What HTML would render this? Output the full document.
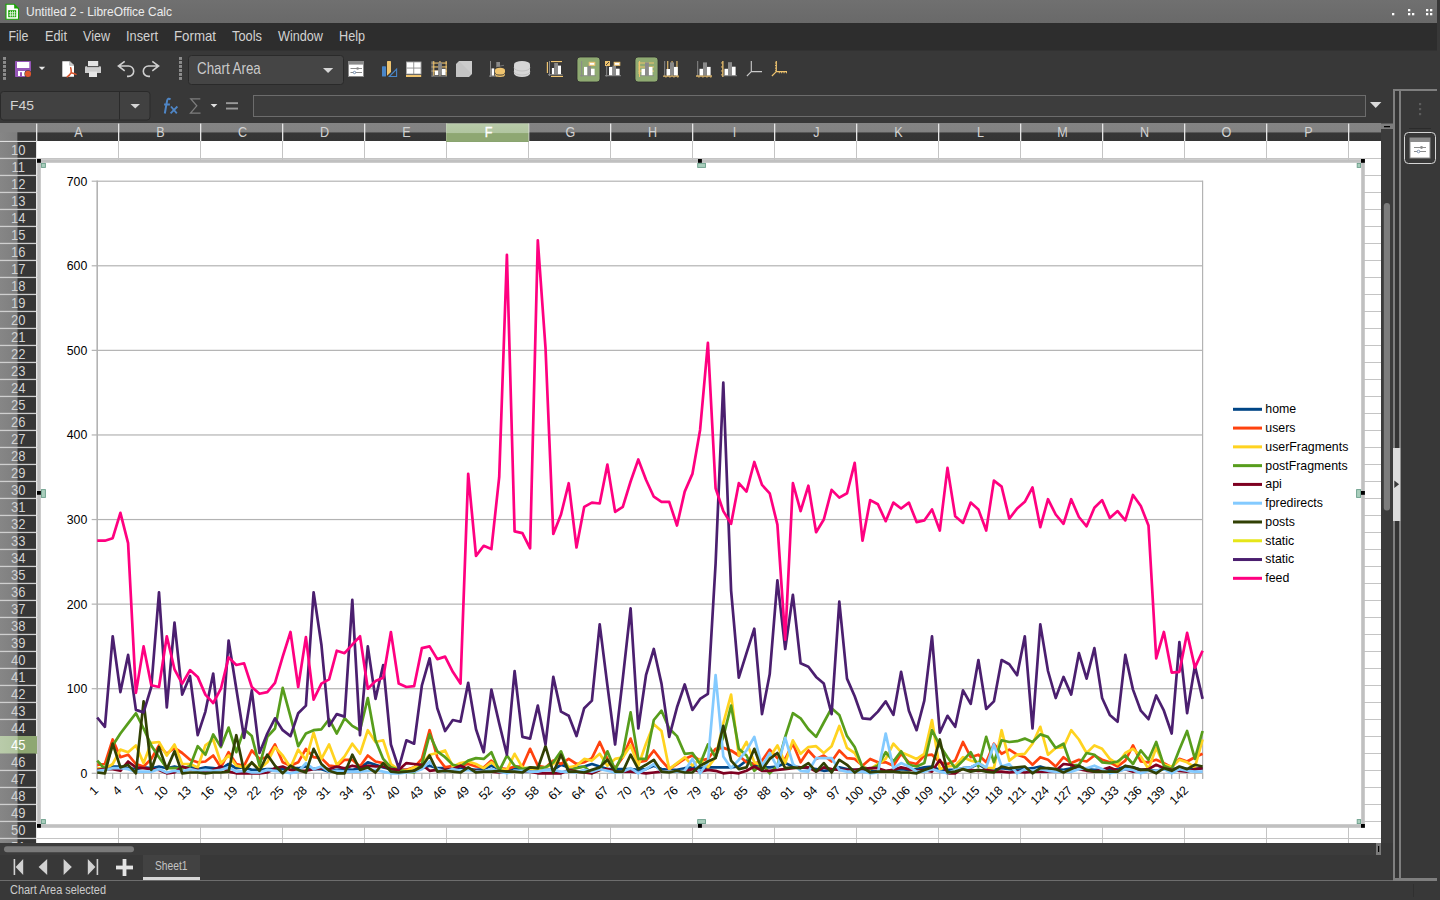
<!DOCTYPE html>
<html><head><meta charset="utf-8"><title>Untitled 2 - LibreOffice Calc</title>
<style>
html,body{margin:0;padding:0;background:#383838;width:1440px;height:900px;overflow:hidden;font-family:"Liberation Sans",sans-serif;}
svg text{font-family:"Liberation Sans",sans-serif;}
</style></head><body>
<svg width="1440" height="900" viewBox="0 0 1440 900" font-family="Liberation Sans, sans-serif" style="display:block"><rect x="0" y="0" width="1440" height="900" fill="#383838"/>
<defs><linearGradient id="tg" x1="0" y1="0" x2="0" y2="1"><stop offset="0" stop-color="#707070"/><stop offset="1" stop-color="#696969"/></linearGradient><linearGradient id="chg" x1="0" y1="0" x2="0" y2="1"><stop offset="0" stop-color="#848484"/><stop offset="0.50" stop-color="#828282"/><stop offset="0.55" stop-color="#363636"/><stop offset="1" stop-color="#343434"/></linearGradient><linearGradient id="rhg" x1="0" y1="0" x2="1" y2="0"><stop offset="0" stop-color="#868686"/><stop offset="0.46" stop-color="#7e7e7e"/><stop offset="0.50" stop-color="#363636"/><stop offset="1" stop-color="#363636"/></linearGradient><linearGradient id="rsel" x1="0" y1="0" x2="1" y2="0"><stop offset="0" stop-color="#b9cbaa"/><stop offset="0.46" stop-color="#b1c5a0"/><stop offset="0.50" stop-color="#8ea772"/><stop offset="1" stop-color="#8ea772"/></linearGradient><linearGradient id="csel" x1="0" y1="0" x2="0" y2="1"><stop offset="0" stop-color="#b9cbaa"/><stop offset="0.50" stop-color="#b1c5a0"/><stop offset="0.55" stop-color="#8ea772"/><stop offset="1" stop-color="#8ea772"/></linearGradient><clipPath id="plot"><rect x="96" y="170" width="1108" height="606"/></clipPath></defs>
<rect x="0" y="0" width="1437" height="23" fill="url(#tg)"/>
<rect x="0" y="23" width="1437" height="28" fill="#2d2d2d"/>
<rect x="0" y="50" width="1437" height="1" fill="#323232"/>
<rect x="1392" y="13" width="2.3" height="2.3" fill="#ffffff"/>
<rect x="1408" y="9" width="2.3" height="2.3" fill="#ffffff"/>
<rect x="1408" y="13" width="2.3" height="2.3" fill="#ffffff"/>
<rect x="1412" y="13" width="2.3" height="2.3" fill="#ffffff"/>
<rect x="1426" y="9" width="2.3" height="2.3" fill="#ffffff"/>
<rect x="1430" y="9" width="2.3" height="2.3" fill="#ffffff"/>
<rect x="1426" y="13" width="2.3" height="2.3" fill="#ffffff"/>
<rect x="1430" y="13" width="2.3" height="2.3" fill="#ffffff"/>
<path d="M6 4.2h8.2l4.3 4.3v10.8h-12.5z" fill="#ffffff" stroke="#18a303" stroke-width="1.1"/>
<path d="M14.2 4.2l4.3 4.3h-4.3z" fill="#18a303"/>
<rect x="8.2" y="10.2" width="8" height="7" fill="#18a303"/>
<rect x="10.0" y="10.8" width="0.8" height="5.8" fill="#dff3dc"/>
<rect x="12.0" y="10.8" width="0.8" height="5.8" fill="#dff3dc"/>
<rect x="14.0" y="10.8" width="0.8" height="5.8" fill="#dff3dc"/>
<rect x="8.8" y="12.0" width="6.8" height="0.7" fill="#dff3dc"/>
<rect x="8.8" y="13.8" width="6.8" height="0.7" fill="#dff3dc"/>
<rect x="8.8" y="15.4" width="6.8" height="0.7" fill="#dff3dc"/>
<text x="26" y="16" font-size="13.5" fill="#ececec" textLength="146.0" lengthAdjust="spacingAndGlyphs" >Untitled 2 - LibreOffice Calc</text>
<text x="8.5" y="40.9" font-size="14.2" fill="#d2d2d2" textLength="20.0" lengthAdjust="spacingAndGlyphs" >File</text>
<text x="45" y="40.9" font-size="14.2" fill="#d2d2d2" textLength="22.0" lengthAdjust="spacingAndGlyphs" >Edit</text>
<text x="83" y="40.9" font-size="14.2" fill="#d2d2d2" textLength="27.0" lengthAdjust="spacingAndGlyphs" >View</text>
<text x="126" y="40.9" font-size="14.2" fill="#d2d2d2" textLength="32.0" lengthAdjust="spacingAndGlyphs" >Insert</text>
<text x="174" y="40.9" font-size="14.2" fill="#d2d2d2" textLength="42.0" lengthAdjust="spacingAndGlyphs" >Format</text>
<text x="232" y="40.9" font-size="14.2" fill="#d2d2d2" textLength="30.0" lengthAdjust="spacingAndGlyphs" >Tools</text>
<text x="278" y="40.9" font-size="14.2" fill="#d2d2d2" textLength="45.0" lengthAdjust="spacingAndGlyphs" >Window</text>
<text x="339" y="40.9" font-size="14.2" fill="#d2d2d2" textLength="26.0" lengthAdjust="spacingAndGlyphs" >Help</text>
<rect x="188.5" y="55.5" width="155" height="29" rx="3" fill="#454545" stroke="#2a2a2a" stroke-width="1"/>
<text x="197" y="74.3" font-size="16.2" fill="#cbcbcb" textLength="63.8" lengthAdjust="spacingAndGlyphs" >Chart Area</text>
<path d="M323 67.9h10.2l-5.1 5.2z" fill="#d6d6d6"/>
<rect x="0.5" y="91.5" width="149.5" height="28.5" rx="3" fill="#414141" stroke="#2a2a2a" stroke-width="1"/>
<rect x="119" y="92" width="1" height="27.5" fill="#2a2a2a"/>
<text x="10" y="109.5" font-size="13.5" fill="#d4d4d4" textLength="24.0" lengthAdjust="spacingAndGlyphs" >F45</text>
<path d="M130.5 104h9.5l-4.75 4.6z" fill="#d6d6d6"/>
<path d="M170.5 99.4C169.1 98.2 167.5 98.6 167.1 100.6L164.8 113.5M164.1 104.4H169.9" fill="none" stroke="#4f86c6" stroke-width="2"/>
<path d="M171 106.5L176.8 113.3M177.4 106.5L170.6 113.3" fill="none" stroke="#4f86c6" stroke-width="1.8"/>
<path d="M200.3 98.8h-9.5l6 7-6.3 7.4h10" fill="none" stroke="#7d7d7d" stroke-width="1.3"/>
<path d="M210.6 104h6.8l-3.4 3.4z" fill="#e0e0e0"/>
<rect x="226" y="102.2" width="12" height="1.9" fill="#9a9a9a"/><rect x="226" y="107.6" width="12" height="1.9" fill="#9a9a9a"/>
<rect x="253.5" y="95.5" width="1112" height="21" fill="#3d3d3d" stroke="#6c6c6c" stroke-width="1"/>
<path d="M1370 102h11.4l-5.7 6z" fill="#dadada"/>
<rect x="37" y="141" width="1344" height="702" fill="#ffffff"/>
<rect x="0" y="123" width="1381" height="18" fill="url(#chg)"/>
<rect x="0" y="123" width="36" height="18.5" fill="url(#rhg)"/>
<rect x="0" y="123" width="36" height="9.3" fill="#848484"/>
<text transform="translate(78.5,136.8) scale(0.9,1)" text-anchor="middle" font-size="14" fill="#d2d2d2" >A</text>
<text transform="translate(160.5,136.8) scale(0.9,1)" text-anchor="middle" font-size="14" fill="#d2d2d2" >B</text>
<text transform="translate(242.5,136.8) scale(0.9,1)" text-anchor="middle" font-size="14" fill="#d2d2d2" >C</text>
<text transform="translate(324.5,136.8) scale(0.9,1)" text-anchor="middle" font-size="14" fill="#d2d2d2" >D</text>
<text transform="translate(406.5,136.8) scale(0.9,1)" text-anchor="middle" font-size="14" fill="#d2d2d2" >E</text>
<text transform="translate(570.5,136.8) scale(0.9,1)" text-anchor="middle" font-size="14" fill="#d2d2d2" >G</text>
<text transform="translate(652.5,136.8) scale(0.9,1)" text-anchor="middle" font-size="14" fill="#d2d2d2" >H</text>
<text transform="translate(734.5,136.8) scale(0.9,1)" text-anchor="middle" font-size="14" fill="#d2d2d2" >I</text>
<text transform="translate(816.5,136.8) scale(0.9,1)" text-anchor="middle" font-size="14" fill="#d2d2d2" >J</text>
<text transform="translate(898.5,136.8) scale(0.9,1)" text-anchor="middle" font-size="14" fill="#d2d2d2" >K</text>
<text transform="translate(980.5,136.8) scale(0.9,1)" text-anchor="middle" font-size="14" fill="#d2d2d2" >L</text>
<text transform="translate(1062.5,136.8) scale(0.9,1)" text-anchor="middle" font-size="14" fill="#d2d2d2" >M</text>
<text transform="translate(1144.5,136.8) scale(0.9,1)" text-anchor="middle" font-size="14" fill="#d2d2d2" >N</text>
<text transform="translate(1226.5,136.8) scale(0.9,1)" text-anchor="middle" font-size="14" fill="#d2d2d2" >O</text>
<text transform="translate(1308.5,136.8) scale(0.9,1)" text-anchor="middle" font-size="14" fill="#d2d2d2" >P</text>
<rect x="36.0" y="123.6" width="1.3" height="18" fill="#e6e6e6"/>
<rect x="118.0" y="123.6" width="1.3" height="18" fill="#e6e6e6"/>
<rect x="118.0" y="141" width="1" height="702" fill="#c4c4c4"/>
<rect x="200.0" y="123.6" width="1.3" height="18" fill="#e6e6e6"/>
<rect x="200.0" y="141" width="1" height="702" fill="#c4c4c4"/>
<rect x="282.0" y="123.6" width="1.3" height="18" fill="#e6e6e6"/>
<rect x="282.0" y="141" width="1" height="702" fill="#c4c4c4"/>
<rect x="364.0" y="123.6" width="1.3" height="18" fill="#e6e6e6"/>
<rect x="364.0" y="141" width="1" height="702" fill="#c4c4c4"/>
<rect x="446.0" y="123.6" width="1.3" height="18" fill="#e6e6e6"/>
<rect x="446.0" y="141" width="1" height="702" fill="#c4c4c4"/>
<rect x="528.0" y="123.6" width="1.3" height="18" fill="#e6e6e6"/>
<rect x="528.0" y="141" width="1" height="702" fill="#c4c4c4"/>
<rect x="610.0" y="123.6" width="1.3" height="18" fill="#e6e6e6"/>
<rect x="610.0" y="141" width="1" height="702" fill="#c4c4c4"/>
<rect x="692.0" y="123.6" width="1.3" height="18" fill="#e6e6e6"/>
<rect x="692.0" y="141" width="1" height="702" fill="#c4c4c4"/>
<rect x="774.0" y="123.6" width="1.3" height="18" fill="#e6e6e6"/>
<rect x="774.0" y="141" width="1" height="702" fill="#c4c4c4"/>
<rect x="856.0" y="123.6" width="1.3" height="18" fill="#e6e6e6"/>
<rect x="856.0" y="141" width="1" height="702" fill="#c4c4c4"/>
<rect x="938.0" y="123.6" width="1.3" height="18" fill="#e6e6e6"/>
<rect x="938.0" y="141" width="1" height="702" fill="#c4c4c4"/>
<rect x="1020.0" y="123.6" width="1.3" height="18" fill="#e6e6e6"/>
<rect x="1020.0" y="141" width="1" height="702" fill="#c4c4c4"/>
<rect x="1102.0" y="123.6" width="1.3" height="18" fill="#e6e6e6"/>
<rect x="1102.0" y="141" width="1" height="702" fill="#c4c4c4"/>
<rect x="1184.0" y="123.6" width="1.3" height="18" fill="#e6e6e6"/>
<rect x="1184.0" y="141" width="1" height="702" fill="#c4c4c4"/>
<rect x="1266.0" y="123.6" width="1.3" height="18" fill="#e6e6e6"/>
<rect x="1266.0" y="141" width="1" height="702" fill="#c4c4c4"/>
<rect x="1348.0" y="123.6" width="1.3" height="18" fill="#e6e6e6"/>
<rect x="1348.0" y="141" width="1" height="702" fill="#c4c4c4"/>
<rect x="446.2" y="123.5" width="82.4" height="18.3" fill="url(#csel)"/>
<rect x="446.2" y="141.2" width="82.4" height="0.7" fill="#7f9b64"/>
<text transform="translate(488.5,136.8) scale(0.9,1)" text-anchor="middle" font-size="14" fill="#ffffff" stroke="#ffffff" stroke-width="0.35">F</text>
<rect x="0" y="141" width="36.5" height="702" fill="url(#rhg)"/>
<rect x="0" y="736.0" width="37" height="17.5" fill="url(#rsel)"/>
<text transform="translate(18.3,155.1) scale(0.93,1)" text-anchor="middle" font-size="14" fill="#d2d2d2" >10</text>
<rect x="0" y="157.8" width="36.5" height="1.3" fill="#cfcfcf"/>
<rect x="37" y="158.0" width="1344" height="1" fill="#c4c4c4"/>
<text transform="translate(18.3,172.1) scale(0.93,1)" text-anchor="middle" font-size="14" fill="#d2d2d2" >11</text>
<rect x="0" y="174.8" width="36.5" height="1.3" fill="#cfcfcf"/>
<rect x="37" y="175.0" width="1344" height="1" fill="#c4c4c4"/>
<text transform="translate(18.3,189.1) scale(0.93,1)" text-anchor="middle" font-size="14" fill="#d2d2d2" >12</text>
<rect x="0" y="191.8" width="36.5" height="1.3" fill="#cfcfcf"/>
<rect x="37" y="192.0" width="1344" height="1" fill="#c4c4c4"/>
<text transform="translate(18.3,206.1) scale(0.93,1)" text-anchor="middle" font-size="14" fill="#d2d2d2" >13</text>
<rect x="0" y="208.8" width="36.5" height="1.3" fill="#cfcfcf"/>
<rect x="37" y="209.0" width="1344" height="1" fill="#c4c4c4"/>
<text transform="translate(18.3,223.1) scale(0.93,1)" text-anchor="middle" font-size="14" fill="#d2d2d2" >14</text>
<rect x="0" y="225.8" width="36.5" height="1.3" fill="#cfcfcf"/>
<rect x="37" y="226.0" width="1344" height="1" fill="#c4c4c4"/>
<text transform="translate(18.3,240.1) scale(0.93,1)" text-anchor="middle" font-size="14" fill="#d2d2d2" >15</text>
<rect x="0" y="242.8" width="36.5" height="1.3" fill="#cfcfcf"/>
<rect x="37" y="243.0" width="1344" height="1" fill="#c4c4c4"/>
<text transform="translate(18.3,257.1) scale(0.93,1)" text-anchor="middle" font-size="14" fill="#d2d2d2" >16</text>
<rect x="0" y="259.8" width="36.5" height="1.3" fill="#cfcfcf"/>
<rect x="37" y="260.0" width="1344" height="1" fill="#c4c4c4"/>
<text transform="translate(18.3,274.1) scale(0.93,1)" text-anchor="middle" font-size="14" fill="#d2d2d2" >17</text>
<rect x="0" y="276.8" width="36.5" height="1.3" fill="#cfcfcf"/>
<rect x="37" y="277.0" width="1344" height="1" fill="#c4c4c4"/>
<text transform="translate(18.3,291.1) scale(0.93,1)" text-anchor="middle" font-size="14" fill="#d2d2d2" >18</text>
<rect x="0" y="293.8" width="36.5" height="1.3" fill="#cfcfcf"/>
<rect x="37" y="294.0" width="1344" height="1" fill="#c4c4c4"/>
<text transform="translate(18.3,308.1) scale(0.93,1)" text-anchor="middle" font-size="14" fill="#d2d2d2" >19</text>
<rect x="0" y="310.8" width="36.5" height="1.3" fill="#cfcfcf"/>
<rect x="37" y="311.0" width="1344" height="1" fill="#c4c4c4"/>
<text transform="translate(18.3,325.1) scale(0.93,1)" text-anchor="middle" font-size="14" fill="#d2d2d2" >20</text>
<rect x="0" y="327.8" width="36.5" height="1.3" fill="#cfcfcf"/>
<rect x="37" y="328.0" width="1344" height="1" fill="#c4c4c4"/>
<text transform="translate(18.3,342.1) scale(0.93,1)" text-anchor="middle" font-size="14" fill="#d2d2d2" >21</text>
<rect x="0" y="344.8" width="36.5" height="1.3" fill="#cfcfcf"/>
<rect x="37" y="345.0" width="1344" height="1" fill="#c4c4c4"/>
<text transform="translate(18.3,359.1) scale(0.93,1)" text-anchor="middle" font-size="14" fill="#d2d2d2" >22</text>
<rect x="0" y="361.8" width="36.5" height="1.3" fill="#cfcfcf"/>
<rect x="37" y="362.0" width="1344" height="1" fill="#c4c4c4"/>
<text transform="translate(18.3,376.1) scale(0.93,1)" text-anchor="middle" font-size="14" fill="#d2d2d2" >23</text>
<rect x="0" y="378.8" width="36.5" height="1.3" fill="#cfcfcf"/>
<rect x="37" y="379.0" width="1344" height="1" fill="#c4c4c4"/>
<text transform="translate(18.3,393.1) scale(0.93,1)" text-anchor="middle" font-size="14" fill="#d2d2d2" >24</text>
<rect x="0" y="395.8" width="36.5" height="1.3" fill="#cfcfcf"/>
<rect x="37" y="396.0" width="1344" height="1" fill="#c4c4c4"/>
<text transform="translate(18.3,410.1) scale(0.93,1)" text-anchor="middle" font-size="14" fill="#d2d2d2" >25</text>
<rect x="0" y="412.8" width="36.5" height="1.3" fill="#cfcfcf"/>
<rect x="37" y="413.0" width="1344" height="1" fill="#c4c4c4"/>
<text transform="translate(18.3,427.1) scale(0.93,1)" text-anchor="middle" font-size="14" fill="#d2d2d2" >26</text>
<rect x="0" y="429.8" width="36.5" height="1.3" fill="#cfcfcf"/>
<rect x="37" y="430.0" width="1344" height="1" fill="#c4c4c4"/>
<text transform="translate(18.3,444.1) scale(0.93,1)" text-anchor="middle" font-size="14" fill="#d2d2d2" >27</text>
<rect x="0" y="446.8" width="36.5" height="1.3" fill="#cfcfcf"/>
<rect x="37" y="447.0" width="1344" height="1" fill="#c4c4c4"/>
<text transform="translate(18.3,461.1) scale(0.93,1)" text-anchor="middle" font-size="14" fill="#d2d2d2" >28</text>
<rect x="0" y="463.8" width="36.5" height="1.3" fill="#cfcfcf"/>
<rect x="37" y="464.0" width="1344" height="1" fill="#c4c4c4"/>
<text transform="translate(18.3,478.1) scale(0.93,1)" text-anchor="middle" font-size="14" fill="#d2d2d2" >29</text>
<rect x="0" y="480.8" width="36.5" height="1.3" fill="#cfcfcf"/>
<rect x="37" y="481.0" width="1344" height="1" fill="#c4c4c4"/>
<text transform="translate(18.3,495.1) scale(0.93,1)" text-anchor="middle" font-size="14" fill="#d2d2d2" >30</text>
<rect x="0" y="497.8" width="36.5" height="1.3" fill="#cfcfcf"/>
<rect x="37" y="498.0" width="1344" height="1" fill="#c4c4c4"/>
<text transform="translate(18.3,512.1) scale(0.93,1)" text-anchor="middle" font-size="14" fill="#d2d2d2" >31</text>
<rect x="0" y="514.8" width="36.5" height="1.3" fill="#cfcfcf"/>
<rect x="37" y="515.0" width="1344" height="1" fill="#c4c4c4"/>
<text transform="translate(18.3,529.1) scale(0.93,1)" text-anchor="middle" font-size="14" fill="#d2d2d2" >32</text>
<rect x="0" y="531.8" width="36.5" height="1.3" fill="#cfcfcf"/>
<rect x="37" y="532.0" width="1344" height="1" fill="#c4c4c4"/>
<text transform="translate(18.3,546.1) scale(0.93,1)" text-anchor="middle" font-size="14" fill="#d2d2d2" >33</text>
<rect x="0" y="548.8" width="36.5" height="1.3" fill="#cfcfcf"/>
<rect x="37" y="549.0" width="1344" height="1" fill="#c4c4c4"/>
<text transform="translate(18.3,563.1) scale(0.93,1)" text-anchor="middle" font-size="14" fill="#d2d2d2" >34</text>
<rect x="0" y="565.8" width="36.5" height="1.3" fill="#cfcfcf"/>
<rect x="37" y="566.0" width="1344" height="1" fill="#c4c4c4"/>
<text transform="translate(18.3,580.1) scale(0.93,1)" text-anchor="middle" font-size="14" fill="#d2d2d2" >35</text>
<rect x="0" y="582.8" width="36.5" height="1.3" fill="#cfcfcf"/>
<rect x="37" y="583.0" width="1344" height="1" fill="#c4c4c4"/>
<text transform="translate(18.3,597.1) scale(0.93,1)" text-anchor="middle" font-size="14" fill="#d2d2d2" >36</text>
<rect x="0" y="599.8" width="36.5" height="1.3" fill="#cfcfcf"/>
<rect x="37" y="600.0" width="1344" height="1" fill="#c4c4c4"/>
<text transform="translate(18.3,614.1) scale(0.93,1)" text-anchor="middle" font-size="14" fill="#d2d2d2" >37</text>
<rect x="0" y="616.8" width="36.5" height="1.3" fill="#cfcfcf"/>
<rect x="37" y="617.0" width="1344" height="1" fill="#c4c4c4"/>
<text transform="translate(18.3,631.1) scale(0.93,1)" text-anchor="middle" font-size="14" fill="#d2d2d2" >38</text>
<rect x="0" y="633.8" width="36.5" height="1.3" fill="#cfcfcf"/>
<rect x="37" y="634.0" width="1344" height="1" fill="#c4c4c4"/>
<text transform="translate(18.3,648.1) scale(0.93,1)" text-anchor="middle" font-size="14" fill="#d2d2d2" >39</text>
<rect x="0" y="650.8" width="36.5" height="1.3" fill="#cfcfcf"/>
<rect x="37" y="651.0" width="1344" height="1" fill="#c4c4c4"/>
<text transform="translate(18.3,665.1) scale(0.93,1)" text-anchor="middle" font-size="14" fill="#d2d2d2" >40</text>
<rect x="0" y="667.8" width="36.5" height="1.3" fill="#cfcfcf"/>
<rect x="37" y="668.0" width="1344" height="1" fill="#c4c4c4"/>
<text transform="translate(18.3,682.1) scale(0.93,1)" text-anchor="middle" font-size="14" fill="#d2d2d2" >41</text>
<rect x="0" y="684.8" width="36.5" height="1.3" fill="#cfcfcf"/>
<rect x="37" y="685.0" width="1344" height="1" fill="#c4c4c4"/>
<text transform="translate(18.3,699.1) scale(0.93,1)" text-anchor="middle" font-size="14" fill="#d2d2d2" >42</text>
<rect x="0" y="701.8" width="36.5" height="1.3" fill="#cfcfcf"/>
<rect x="37" y="702.0" width="1344" height="1" fill="#c4c4c4"/>
<text transform="translate(18.3,716.1) scale(0.93,1)" text-anchor="middle" font-size="14" fill="#d2d2d2" >43</text>
<rect x="0" y="718.8" width="36.5" height="1.3" fill="#cfcfcf"/>
<rect x="37" y="719.0" width="1344" height="1" fill="#c4c4c4"/>
<text transform="translate(18.3,733.1) scale(0.93,1)" text-anchor="middle" font-size="14" fill="#d2d2d2" >44</text>
<rect x="37" y="736.0" width="1344" height="1" fill="#c4c4c4"/>
<text transform="translate(18.3,750.1) scale(0.93,1)" text-anchor="middle" font-size="14" fill="#ffffff" >45</text>
<rect x="37" y="753.0" width="1344" height="1" fill="#c4c4c4"/>
<text transform="translate(18.3,767.1) scale(0.93,1)" text-anchor="middle" font-size="14" fill="#d2d2d2" >46</text>
<rect x="0" y="769.8" width="36.5" height="1.3" fill="#cfcfcf"/>
<rect x="37" y="770.0" width="1344" height="1" fill="#c4c4c4"/>
<text transform="translate(18.3,784.1) scale(0.93,1)" text-anchor="middle" font-size="14" fill="#d2d2d2" >47</text>
<rect x="0" y="786.8" width="36.5" height="1.3" fill="#cfcfcf"/>
<rect x="37" y="787.0" width="1344" height="1" fill="#c4c4c4"/>
<text transform="translate(18.3,801.1) scale(0.93,1)" text-anchor="middle" font-size="14" fill="#d2d2d2" >48</text>
<rect x="0" y="803.8" width="36.5" height="1.3" fill="#cfcfcf"/>
<rect x="37" y="804.0" width="1344" height="1" fill="#c4c4c4"/>
<text transform="translate(18.3,818.1) scale(0.93,1)" text-anchor="middle" font-size="14" fill="#d2d2d2" >49</text>
<rect x="0" y="820.8" width="36.5" height="1.3" fill="#cfcfcf"/>
<rect x="37" y="821.0" width="1344" height="1" fill="#c4c4c4"/>
<text transform="translate(18.3,835.1) scale(0.93,1)" text-anchor="middle" font-size="14" fill="#d2d2d2" >50</text>
<rect x="0" y="837.8" width="36.5" height="1.3" fill="#cfcfcf"/>
<rect x="37" y="838.0" width="1344" height="1" fill="#c4c4c4"/>
<text transform="translate(18.3,852.1) scale(0.93,1)" text-anchor="middle" font-size="14" fill="#d2d2d2" >51</text>
<rect x="36" y="141" width="1" height="702" fill="#e6e6e6"/>
<rect x="0" y="140.9" width="36.5" height="1.1" fill="#e0e0e0"/>
<rect x="35.5" y="736.2" width="1.7" height="17.6" fill="#8ea772"/>
<rect x="0" y="843" width="1393" height="57" fill="#383838"/>
<rect x="39" y="161" width="1324" height="665" fill="#ffffff" stroke="#c0c0c0" stroke-width="3.6"/>
<rect x="41.4" y="163.4" width="4.0" height="4.0" fill="#a9cebc" stroke="#6a9e8a" stroke-width="0.9"/>
<rect x="1357.2" y="163.4" width="3.4000000000000004" height="4.0" fill="#a9cebc" stroke="#6a9e8a" stroke-width="0.9"/>
<rect x="41.4" y="819.6" width="4.0" height="4.0" fill="#a9cebc" stroke="#6a9e8a" stroke-width="0.9"/>
<rect x="1357.2" y="819.6" width="3.4000000000000004" height="4.0" fill="#a9cebc" stroke="#6a9e8a" stroke-width="0.9"/>
<rect x="697.6999999999999" y="163.4" width="7.8" height="4.0" fill="#a9cebc" stroke="#6a9e8a" stroke-width="0.9"/>
<rect x="697.6999999999999" y="819.6" width="7.8" height="4.0" fill="#a9cebc" stroke="#6a9e8a" stroke-width="0.9"/>
<rect x="41.4" y="489.59999999999997" width="4.0" height="7.8" fill="#a9cebc" stroke="#6a9e8a" stroke-width="0.9"/>
<rect x="1356.6000000000001" y="489.59999999999997" width="4.0" height="7.8" fill="#a9cebc" stroke="#6a9e8a" stroke-width="0.9"/>
<rect x="37" y="159" width="3.9" height="3.8" fill="#000000"/>
<rect x="1361" y="159" width="3.9" height="3.8" fill="#000000"/>
<rect x="37" y="824" width="3.9" height="3.8" fill="#000000"/>
<rect x="1361" y="824" width="3.9" height="3.8" fill="#000000"/>
<rect x="698" y="159" width="3.9" height="3.8" fill="#000000"/>
<rect x="698" y="824" width="3.9" height="3.8" fill="#000000"/>
<rect x="37" y="491" width="3.9" height="3.8" fill="#000000"/>
<rect x="1361" y="491" width="3.9" height="3.8" fill="#000000"/>
<rect x="91.7" y="772.70" width="1110.9" height="1.2" fill="#b3b3b3"/>
<text x="87.3" y="777.70" font-size="12.3" text-anchor="end" fill="#000">0</text>
<rect x="91.7" y="688.11" width="1110.9" height="1.2" fill="#b3b3b3"/>
<text x="87.3" y="693.11" font-size="12.3" text-anchor="end" fill="#000">100</text>
<rect x="91.7" y="603.53" width="1110.9" height="1.2" fill="#b3b3b3"/>
<text x="87.3" y="608.53" font-size="12.3" text-anchor="end" fill="#000">200</text>
<rect x="91.7" y="518.94" width="1110.9" height="1.2" fill="#b3b3b3"/>
<text x="87.3" y="523.94" font-size="12.3" text-anchor="end" fill="#000">300</text>
<rect x="91.7" y="434.36" width="1110.9" height="1.2" fill="#b3b3b3"/>
<text x="87.3" y="439.36" font-size="12.3" text-anchor="end" fill="#000">400</text>
<rect x="91.7" y="349.77" width="1110.9" height="1.2" fill="#b3b3b3"/>
<text x="87.3" y="354.77" font-size="12.3" text-anchor="end" fill="#000">500</text>
<rect x="91.7" y="265.19" width="1110.9" height="1.2" fill="#b3b3b3"/>
<text x="87.3" y="270.19" font-size="12.3" text-anchor="end" fill="#000">600</text>
<rect x="91.7" y="180.60" width="1110.9" height="1.2" fill="#b3b3b3"/>
<text x="87.3" y="185.60" font-size="12.3" text-anchor="end" fill="#000">700</text>
<rect x="96.4" y="180.6" width="1.6" height="598.1" fill="#b3b3b3"/>
<rect x="1202.0" y="180.6" width="1.2" height="598.1" fill="#b3b3b3"/>
<rect x="96.60" y="773.3" width="1.2" height="5.6" fill="#b3b3b3"/>
<rect x="104.33" y="773.3" width="1.2" height="5.6" fill="#b3b3b3"/>
<rect x="112.06" y="773.3" width="1.2" height="5.6" fill="#b3b3b3"/>
<rect x="119.79" y="773.3" width="1.2" height="5.6" fill="#b3b3b3"/>
<rect x="127.52" y="773.3" width="1.2" height="5.6" fill="#b3b3b3"/>
<rect x="135.25" y="773.3" width="1.2" height="5.6" fill="#b3b3b3"/>
<rect x="142.98" y="773.3" width="1.2" height="5.6" fill="#b3b3b3"/>
<rect x="150.71" y="773.3" width="1.2" height="5.6" fill="#b3b3b3"/>
<rect x="158.44" y="773.3" width="1.2" height="5.6" fill="#b3b3b3"/>
<rect x="166.17" y="773.3" width="1.2" height="5.6" fill="#b3b3b3"/>
<rect x="173.90" y="773.3" width="1.2" height="5.6" fill="#b3b3b3"/>
<rect x="181.63" y="773.3" width="1.2" height="5.6" fill="#b3b3b3"/>
<rect x="189.36" y="773.3" width="1.2" height="5.6" fill="#b3b3b3"/>
<rect x="197.09" y="773.3" width="1.2" height="5.6" fill="#b3b3b3"/>
<rect x="204.82" y="773.3" width="1.2" height="5.6" fill="#b3b3b3"/>
<rect x="212.55" y="773.3" width="1.2" height="5.6" fill="#b3b3b3"/>
<rect x="220.28" y="773.3" width="1.2" height="5.6" fill="#b3b3b3"/>
<rect x="228.01" y="773.3" width="1.2" height="5.6" fill="#b3b3b3"/>
<rect x="235.74" y="773.3" width="1.2" height="5.6" fill="#b3b3b3"/>
<rect x="243.47" y="773.3" width="1.2" height="5.6" fill="#b3b3b3"/>
<rect x="251.20" y="773.3" width="1.2" height="5.6" fill="#b3b3b3"/>
<rect x="258.93" y="773.3" width="1.2" height="5.6" fill="#b3b3b3"/>
<rect x="266.66" y="773.3" width="1.2" height="5.6" fill="#b3b3b3"/>
<rect x="274.39" y="773.3" width="1.2" height="5.6" fill="#b3b3b3"/>
<rect x="282.12" y="773.3" width="1.2" height="5.6" fill="#b3b3b3"/>
<rect x="289.85" y="773.3" width="1.2" height="5.6" fill="#b3b3b3"/>
<rect x="297.58" y="773.3" width="1.2" height="5.6" fill="#b3b3b3"/>
<rect x="305.31" y="773.3" width="1.2" height="5.6" fill="#b3b3b3"/>
<rect x="313.04" y="773.3" width="1.2" height="5.6" fill="#b3b3b3"/>
<rect x="320.77" y="773.3" width="1.2" height="5.6" fill="#b3b3b3"/>
<rect x="328.50" y="773.3" width="1.2" height="5.6" fill="#b3b3b3"/>
<rect x="336.23" y="773.3" width="1.2" height="5.6" fill="#b3b3b3"/>
<rect x="343.96" y="773.3" width="1.2" height="5.6" fill="#b3b3b3"/>
<rect x="351.69" y="773.3" width="1.2" height="5.6" fill="#b3b3b3"/>
<rect x="359.42" y="773.3" width="1.2" height="5.6" fill="#b3b3b3"/>
<rect x="367.15" y="773.3" width="1.2" height="5.6" fill="#b3b3b3"/>
<rect x="374.88" y="773.3" width="1.2" height="5.6" fill="#b3b3b3"/>
<rect x="382.61" y="773.3" width="1.2" height="5.6" fill="#b3b3b3"/>
<rect x="390.34" y="773.3" width="1.2" height="5.6" fill="#b3b3b3"/>
<rect x="398.07" y="773.3" width="1.2" height="5.6" fill="#b3b3b3"/>
<rect x="405.80" y="773.3" width="1.2" height="5.6" fill="#b3b3b3"/>
<rect x="413.53" y="773.3" width="1.2" height="5.6" fill="#b3b3b3"/>
<rect x="421.26" y="773.3" width="1.2" height="5.6" fill="#b3b3b3"/>
<rect x="428.99" y="773.3" width="1.2" height="5.6" fill="#b3b3b3"/>
<rect x="436.72" y="773.3" width="1.2" height="5.6" fill="#b3b3b3"/>
<rect x="444.45" y="773.3" width="1.2" height="5.6" fill="#b3b3b3"/>
<rect x="452.18" y="773.3" width="1.2" height="5.6" fill="#b3b3b3"/>
<rect x="459.91" y="773.3" width="1.2" height="5.6" fill="#b3b3b3"/>
<rect x="467.64" y="773.3" width="1.2" height="5.6" fill="#b3b3b3"/>
<rect x="475.37" y="773.3" width="1.2" height="5.6" fill="#b3b3b3"/>
<rect x="483.10" y="773.3" width="1.2" height="5.6" fill="#b3b3b3"/>
<rect x="490.83" y="773.3" width="1.2" height="5.6" fill="#b3b3b3"/>
<rect x="498.56" y="773.3" width="1.2" height="5.6" fill="#b3b3b3"/>
<rect x="506.29" y="773.3" width="1.2" height="5.6" fill="#b3b3b3"/>
<rect x="514.02" y="773.3" width="1.2" height="5.6" fill="#b3b3b3"/>
<rect x="521.75" y="773.3" width="1.2" height="5.6" fill="#b3b3b3"/>
<rect x="529.48" y="773.3" width="1.2" height="5.6" fill="#b3b3b3"/>
<rect x="537.21" y="773.3" width="1.2" height="5.6" fill="#b3b3b3"/>
<rect x="544.94" y="773.3" width="1.2" height="5.6" fill="#b3b3b3"/>
<rect x="552.67" y="773.3" width="1.2" height="5.6" fill="#b3b3b3"/>
<rect x="560.40" y="773.3" width="1.2" height="5.6" fill="#b3b3b3"/>
<rect x="568.13" y="773.3" width="1.2" height="5.6" fill="#b3b3b3"/>
<rect x="575.86" y="773.3" width="1.2" height="5.6" fill="#b3b3b3"/>
<rect x="583.59" y="773.3" width="1.2" height="5.6" fill="#b3b3b3"/>
<rect x="591.32" y="773.3" width="1.2" height="5.6" fill="#b3b3b3"/>
<rect x="599.05" y="773.3" width="1.2" height="5.6" fill="#b3b3b3"/>
<rect x="606.78" y="773.3" width="1.2" height="5.6" fill="#b3b3b3"/>
<rect x="614.51" y="773.3" width="1.2" height="5.6" fill="#b3b3b3"/>
<rect x="622.24" y="773.3" width="1.2" height="5.6" fill="#b3b3b3"/>
<rect x="629.97" y="773.3" width="1.2" height="5.6" fill="#b3b3b3"/>
<rect x="637.70" y="773.3" width="1.2" height="5.6" fill="#b3b3b3"/>
<rect x="645.43" y="773.3" width="1.2" height="5.6" fill="#b3b3b3"/>
<rect x="653.17" y="773.3" width="1.2" height="5.6" fill="#b3b3b3"/>
<rect x="660.90" y="773.3" width="1.2" height="5.6" fill="#b3b3b3"/>
<rect x="668.63" y="773.3" width="1.2" height="5.6" fill="#b3b3b3"/>
<rect x="676.36" y="773.3" width="1.2" height="5.6" fill="#b3b3b3"/>
<rect x="684.09" y="773.3" width="1.2" height="5.6" fill="#b3b3b3"/>
<rect x="691.82" y="773.3" width="1.2" height="5.6" fill="#b3b3b3"/>
<rect x="699.55" y="773.3" width="1.2" height="5.6" fill="#b3b3b3"/>
<rect x="707.28" y="773.3" width="1.2" height="5.6" fill="#b3b3b3"/>
<rect x="715.01" y="773.3" width="1.2" height="5.6" fill="#b3b3b3"/>
<rect x="722.74" y="773.3" width="1.2" height="5.6" fill="#b3b3b3"/>
<rect x="730.47" y="773.3" width="1.2" height="5.6" fill="#b3b3b3"/>
<rect x="738.20" y="773.3" width="1.2" height="5.6" fill="#b3b3b3"/>
<rect x="745.93" y="773.3" width="1.2" height="5.6" fill="#b3b3b3"/>
<rect x="753.66" y="773.3" width="1.2" height="5.6" fill="#b3b3b3"/>
<rect x="761.39" y="773.3" width="1.2" height="5.6" fill="#b3b3b3"/>
<rect x="769.12" y="773.3" width="1.2" height="5.6" fill="#b3b3b3"/>
<rect x="776.85" y="773.3" width="1.2" height="5.6" fill="#b3b3b3"/>
<rect x="784.58" y="773.3" width="1.2" height="5.6" fill="#b3b3b3"/>
<rect x="792.31" y="773.3" width="1.2" height="5.6" fill="#b3b3b3"/>
<rect x="800.04" y="773.3" width="1.2" height="5.6" fill="#b3b3b3"/>
<rect x="807.77" y="773.3" width="1.2" height="5.6" fill="#b3b3b3"/>
<rect x="815.50" y="773.3" width="1.2" height="5.6" fill="#b3b3b3"/>
<rect x="823.23" y="773.3" width="1.2" height="5.6" fill="#b3b3b3"/>
<rect x="830.96" y="773.3" width="1.2" height="5.6" fill="#b3b3b3"/>
<rect x="838.69" y="773.3" width="1.2" height="5.6" fill="#b3b3b3"/>
<rect x="846.42" y="773.3" width="1.2" height="5.6" fill="#b3b3b3"/>
<rect x="854.15" y="773.3" width="1.2" height="5.6" fill="#b3b3b3"/>
<rect x="861.88" y="773.3" width="1.2" height="5.6" fill="#b3b3b3"/>
<rect x="869.61" y="773.3" width="1.2" height="5.6" fill="#b3b3b3"/>
<rect x="877.34" y="773.3" width="1.2" height="5.6" fill="#b3b3b3"/>
<rect x="885.07" y="773.3" width="1.2" height="5.6" fill="#b3b3b3"/>
<rect x="892.80" y="773.3" width="1.2" height="5.6" fill="#b3b3b3"/>
<rect x="900.53" y="773.3" width="1.2" height="5.6" fill="#b3b3b3"/>
<rect x="908.26" y="773.3" width="1.2" height="5.6" fill="#b3b3b3"/>
<rect x="915.99" y="773.3" width="1.2" height="5.6" fill="#b3b3b3"/>
<rect x="923.72" y="773.3" width="1.2" height="5.6" fill="#b3b3b3"/>
<rect x="931.45" y="773.3" width="1.2" height="5.6" fill="#b3b3b3"/>
<rect x="939.18" y="773.3" width="1.2" height="5.6" fill="#b3b3b3"/>
<rect x="946.91" y="773.3" width="1.2" height="5.6" fill="#b3b3b3"/>
<rect x="954.64" y="773.3" width="1.2" height="5.6" fill="#b3b3b3"/>
<rect x="962.37" y="773.3" width="1.2" height="5.6" fill="#b3b3b3"/>
<rect x="970.10" y="773.3" width="1.2" height="5.6" fill="#b3b3b3"/>
<rect x="977.83" y="773.3" width="1.2" height="5.6" fill="#b3b3b3"/>
<rect x="985.56" y="773.3" width="1.2" height="5.6" fill="#b3b3b3"/>
<rect x="993.29" y="773.3" width="1.2" height="5.6" fill="#b3b3b3"/>
<rect x="1001.02" y="773.3" width="1.2" height="5.6" fill="#b3b3b3"/>
<rect x="1008.75" y="773.3" width="1.2" height="5.6" fill="#b3b3b3"/>
<rect x="1016.48" y="773.3" width="1.2" height="5.6" fill="#b3b3b3"/>
<rect x="1024.21" y="773.3" width="1.2" height="5.6" fill="#b3b3b3"/>
<rect x="1031.94" y="773.3" width="1.2" height="5.6" fill="#b3b3b3"/>
<rect x="1039.67" y="773.3" width="1.2" height="5.6" fill="#b3b3b3"/>
<rect x="1047.40" y="773.3" width="1.2" height="5.6" fill="#b3b3b3"/>
<rect x="1055.13" y="773.3" width="1.2" height="5.6" fill="#b3b3b3"/>
<rect x="1062.86" y="773.3" width="1.2" height="5.6" fill="#b3b3b3"/>
<rect x="1070.59" y="773.3" width="1.2" height="5.6" fill="#b3b3b3"/>
<rect x="1078.32" y="773.3" width="1.2" height="5.6" fill="#b3b3b3"/>
<rect x="1086.05" y="773.3" width="1.2" height="5.6" fill="#b3b3b3"/>
<rect x="1093.78" y="773.3" width="1.2" height="5.6" fill="#b3b3b3"/>
<rect x="1101.51" y="773.3" width="1.2" height="5.6" fill="#b3b3b3"/>
<rect x="1109.24" y="773.3" width="1.2" height="5.6" fill="#b3b3b3"/>
<rect x="1116.97" y="773.3" width="1.2" height="5.6" fill="#b3b3b3"/>
<rect x="1124.70" y="773.3" width="1.2" height="5.6" fill="#b3b3b3"/>
<rect x="1132.43" y="773.3" width="1.2" height="5.6" fill="#b3b3b3"/>
<rect x="1140.16" y="773.3" width="1.2" height="5.6" fill="#b3b3b3"/>
<rect x="1147.89" y="773.3" width="1.2" height="5.6" fill="#b3b3b3"/>
<rect x="1155.62" y="773.3" width="1.2" height="5.6" fill="#b3b3b3"/>
<rect x="1163.35" y="773.3" width="1.2" height="5.6" fill="#b3b3b3"/>
<rect x="1171.08" y="773.3" width="1.2" height="5.6" fill="#b3b3b3"/>
<rect x="1178.81" y="773.3" width="1.2" height="5.6" fill="#b3b3b3"/>
<rect x="1186.54" y="773.3" width="1.2" height="5.6" fill="#b3b3b3"/>
<rect x="1194.27" y="773.3" width="1.2" height="5.6" fill="#b3b3b3"/>
<rect x="1202.00" y="773.3" width="1.2" height="5.6" fill="#b3b3b3"/>
<text transform="translate(96.10,788.0) rotate(-45)" text-anchor="end" y="4.3" font-size="12.3" fill="#000">1</text>
<text transform="translate(119.29,788.0) rotate(-45)" text-anchor="end" y="4.3" font-size="12.3" fill="#000">4</text>
<text transform="translate(142.48,788.0) rotate(-45)" text-anchor="end" y="4.3" font-size="12.3" fill="#000">7</text>
<text transform="translate(165.67,788.0) rotate(-45)" text-anchor="end" y="4.3" font-size="12.3" fill="#000">10</text>
<text transform="translate(188.86,788.0) rotate(-45)" text-anchor="end" y="4.3" font-size="12.3" fill="#000">13</text>
<text transform="translate(212.05,788.0) rotate(-45)" text-anchor="end" y="4.3" font-size="12.3" fill="#000">16</text>
<text transform="translate(235.24,788.0) rotate(-45)" text-anchor="end" y="4.3" font-size="12.3" fill="#000">19</text>
<text transform="translate(258.43,788.0) rotate(-45)" text-anchor="end" y="4.3" font-size="12.3" fill="#000">22</text>
<text transform="translate(281.62,788.0) rotate(-45)" text-anchor="end" y="4.3" font-size="12.3" fill="#000">25</text>
<text transform="translate(304.81,788.0) rotate(-45)" text-anchor="end" y="4.3" font-size="12.3" fill="#000">28</text>
<text transform="translate(328.00,788.0) rotate(-45)" text-anchor="end" y="4.3" font-size="12.3" fill="#000">31</text>
<text transform="translate(351.19,788.0) rotate(-45)" text-anchor="end" y="4.3" font-size="12.3" fill="#000">34</text>
<text transform="translate(374.38,788.0) rotate(-45)" text-anchor="end" y="4.3" font-size="12.3" fill="#000">37</text>
<text transform="translate(397.57,788.0) rotate(-45)" text-anchor="end" y="4.3" font-size="12.3" fill="#000">40</text>
<text transform="translate(420.76,788.0) rotate(-45)" text-anchor="end" y="4.3" font-size="12.3" fill="#000">43</text>
<text transform="translate(443.95,788.0) rotate(-45)" text-anchor="end" y="4.3" font-size="12.3" fill="#000">46</text>
<text transform="translate(467.14,788.0) rotate(-45)" text-anchor="end" y="4.3" font-size="12.3" fill="#000">49</text>
<text transform="translate(490.33,788.0) rotate(-45)" text-anchor="end" y="4.3" font-size="12.3" fill="#000">52</text>
<text transform="translate(513.52,788.0) rotate(-45)" text-anchor="end" y="4.3" font-size="12.3" fill="#000">55</text>
<text transform="translate(536.71,788.0) rotate(-45)" text-anchor="end" y="4.3" font-size="12.3" fill="#000">58</text>
<text transform="translate(559.90,788.0) rotate(-45)" text-anchor="end" y="4.3" font-size="12.3" fill="#000">61</text>
<text transform="translate(583.09,788.0) rotate(-45)" text-anchor="end" y="4.3" font-size="12.3" fill="#000">64</text>
<text transform="translate(606.28,788.0) rotate(-45)" text-anchor="end" y="4.3" font-size="12.3" fill="#000">67</text>
<text transform="translate(629.47,788.0) rotate(-45)" text-anchor="end" y="4.3" font-size="12.3" fill="#000">70</text>
<text transform="translate(652.67,788.0) rotate(-45)" text-anchor="end" y="4.3" font-size="12.3" fill="#000">73</text>
<text transform="translate(675.86,788.0) rotate(-45)" text-anchor="end" y="4.3" font-size="12.3" fill="#000">76</text>
<text transform="translate(699.05,788.0) rotate(-45)" text-anchor="end" y="4.3" font-size="12.3" fill="#000">79</text>
<text transform="translate(722.24,788.0) rotate(-45)" text-anchor="end" y="4.3" font-size="12.3" fill="#000">82</text>
<text transform="translate(745.43,788.0) rotate(-45)" text-anchor="end" y="4.3" font-size="12.3" fill="#000">85</text>
<text transform="translate(768.62,788.0) rotate(-45)" text-anchor="end" y="4.3" font-size="12.3" fill="#000">88</text>
<text transform="translate(791.81,788.0) rotate(-45)" text-anchor="end" y="4.3" font-size="12.3" fill="#000">91</text>
<text transform="translate(815.00,788.0) rotate(-45)" text-anchor="end" y="4.3" font-size="12.3" fill="#000">94</text>
<text transform="translate(838.19,788.0) rotate(-45)" text-anchor="end" y="4.3" font-size="12.3" fill="#000">97</text>
<text transform="translate(861.38,788.0) rotate(-45)" text-anchor="end" y="4.3" font-size="12.3" fill="#000">100</text>
<text transform="translate(884.57,788.0) rotate(-45)" text-anchor="end" y="4.3" font-size="12.3" fill="#000">103</text>
<text transform="translate(907.76,788.0) rotate(-45)" text-anchor="end" y="4.3" font-size="12.3" fill="#000">106</text>
<text transform="translate(930.95,788.0) rotate(-45)" text-anchor="end" y="4.3" font-size="12.3" fill="#000">109</text>
<text transform="translate(954.14,788.0) rotate(-45)" text-anchor="end" y="4.3" font-size="12.3" fill="#000">112</text>
<text transform="translate(977.33,788.0) rotate(-45)" text-anchor="end" y="4.3" font-size="12.3" fill="#000">115</text>
<text transform="translate(1000.52,788.0) rotate(-45)" text-anchor="end" y="4.3" font-size="12.3" fill="#000">118</text>
<text transform="translate(1023.71,788.0) rotate(-45)" text-anchor="end" y="4.3" font-size="12.3" fill="#000">121</text>
<text transform="translate(1046.90,788.0) rotate(-45)" text-anchor="end" y="4.3" font-size="12.3" fill="#000">124</text>
<text transform="translate(1070.09,788.0) rotate(-45)" text-anchor="end" y="4.3" font-size="12.3" fill="#000">127</text>
<text transform="translate(1093.28,788.0) rotate(-45)" text-anchor="end" y="4.3" font-size="12.3" fill="#000">130</text>
<text transform="translate(1116.47,788.0) rotate(-45)" text-anchor="end" y="4.3" font-size="12.3" fill="#000">133</text>
<text transform="translate(1139.66,788.0) rotate(-45)" text-anchor="end" y="4.3" font-size="12.3" fill="#000">136</text>
<text transform="translate(1162.85,788.0) rotate(-45)" text-anchor="end" y="4.3" font-size="12.3" fill="#000">139</text>
<text transform="translate(1186.04,788.0) rotate(-45)" text-anchor="end" y="4.3" font-size="12.3" fill="#000">142</text>
<g clip-path="url(#plot)" fill="none" stroke-width="2.7" stroke-linejoin="round" stroke-linecap="butt">
<polyline points="97.2,769.1 104.9,768.2 112.7,766.5 120.4,766.5 128.1,768.2 135.9,769.1 143.6,767.4 151.3,768.2 159.0,766.5 166.8,768.2 174.5,766.5 182.2,768.2 190.0,766.5 197.7,769.1 205.4,767.4 213.2,768.2 220.9,769.1 228.6,764.0 236.3,768.2 244.1,767.4 251.8,769.9 259.5,769.9 267.3,769.1 275.0,769.1 282.7,769.1 290.5,768.2 298.2,768.2 305.9,766.5 313.6,769.1 321.4,769.1 329.1,771.6 336.8,769.9 344.6,769.1 352.3,769.9 360.0,768.2 367.8,762.3 375.5,764.8 383.2,767.4 390.9,769.1 398.7,769.9 406.4,769.9 414.1,769.1 421.9,768.2 429.6,765.7 437.3,768.2 445.1,768.2 452.8,769.1 460.5,767.4 468.2,769.1 476.0,769.9 483.7,769.1 491.4,765.7 499.2,769.1 506.9,769.9 514.6,768.2 522.4,769.1 530.1,769.1 537.8,769.9 545.5,769.9 553.3,769.9 561.0,764.8 568.7,767.4 576.5,767.4 584.2,766.5 591.9,764.0 599.7,766.5 607.4,769.1 615.1,769.1 622.8,769.1 630.6,769.1 638.3,769.9 646.0,769.1 653.8,765.7 661.5,769.1 669.2,769.9 677.0,769.9 684.7,768.2 692.4,767.4 700.1,768.2 707.9,767.4 715.6,767.4 723.3,767.4 731.1,767.4 738.8,766.5 746.5,760.6 754.3,764.8 762.0,767.4 769.7,767.4 777.4,766.5 785.2,763.1 792.9,766.5 800.6,767.4 808.4,768.2 816.1,769.1 823.8,770.8 831.6,769.9 839.3,767.4 847.0,769.1 854.7,769.9 862.5,769.9 870.2,770.8 877.9,771.6 885.7,771.6 893.4,769.9 901.1,769.1 908.9,769.9 916.6,769.1 924.3,767.4 932.0,766.5 939.8,769.9 947.5,769.9 955.2,769.9 963.0,768.2 970.7,767.4 978.4,764.0 986.2,769.1 993.9,769.9 1001.6,768.2 1009.3,769.1 1017.1,769.9 1024.8,769.1 1032.5,768.2 1040.3,766.5 1048.0,769.1 1055.7,769.1 1063.5,769.9 1071.2,768.2 1078.9,766.5 1086.6,769.1 1094.4,769.9 1102.1,769.9 1109.8,769.9 1117.6,769.1 1125.3,766.5 1133.0,767.4 1140.8,769.9 1148.5,769.9 1156.2,770.8 1163.9,769.1 1171.7,769.9 1179.4,767.4 1187.1,769.1 1194.9,769.1 1202.6,768.2" stroke="#004586"/>
<polyline points="97.2,764.8 104.9,764.0 112.7,739.5 120.4,757.2 128.1,754.7 135.9,764.0 143.6,766.5 151.3,758.9 159.0,745.4 166.8,753.8 174.5,747.9 182.2,753.0 190.0,759.8 197.7,762.3 205.4,761.5 213.2,755.5 220.9,767.4 228.6,752.2 236.3,764.0 244.1,765.7 251.8,750.5 259.5,758.9 267.3,757.2 275.0,744.5 282.7,762.3 290.5,765.7 298.2,762.3 305.9,748.8 313.6,757.2 321.4,758.1 329.1,765.7 336.8,766.5 344.6,759.8 352.3,759.8 360.0,766.5 367.8,755.5 375.5,761.5 383.2,763.1 390.9,767.4 398.7,769.9 406.4,769.9 414.1,767.4 421.9,758.9 429.6,730.2 437.3,757.2 445.1,767.4 452.8,765.7 460.5,765.7 468.2,764.0 476.0,766.5 483.7,767.4 491.4,760.6 499.2,768.2 506.9,769.1 514.6,766.5 522.4,766.5 530.1,748.8 537.8,765.7 545.5,767.4 553.3,760.6 561.0,764.0 568.7,758.9 576.5,764.0 584.2,762.3 591.9,758.1 599.7,742.0 607.4,758.9 615.1,768.2 622.8,757.2 630.6,738.6 638.3,762.3 646.0,760.6 653.8,750.5 661.5,760.6 669.2,769.1 677.0,764.0 684.7,758.9 692.4,755.5 700.1,760.6 707.9,758.9 715.6,748.8 723.3,747.9 731.1,750.5 738.8,755.5 746.5,762.3 754.3,764.0 762.0,760.6 769.7,749.6 777.4,758.1 785.2,758.9 792.9,743.7 800.6,762.3 808.4,750.5 816.1,758.9 823.8,755.5 831.6,761.5 839.3,750.5 847.0,758.1 854.7,758.9 862.5,765.7 870.2,758.9 877.9,762.3 885.7,762.3 893.4,765.7 901.1,753.8 908.9,762.3 916.6,764.0 924.3,755.5 932.0,754.7 939.8,762.3 947.5,764.0 955.2,760.6 963.0,742.0 970.7,757.2 978.4,754.7 986.2,762.3 993.9,743.7 1001.6,753.8 1009.3,749.6 1017.1,754.7 1024.8,757.2 1032.5,764.8 1040.3,757.2 1048.0,759.8 1055.7,766.5 1063.5,757.2 1071.2,763.1 1078.9,759.8 1086.6,761.5 1094.4,755.5 1102.1,759.8 1109.8,762.3 1117.6,766.5 1125.3,760.6 1133.0,745.4 1140.8,761.5 1148.5,762.3 1156.2,759.8 1163.9,763.1 1171.7,767.4 1179.4,758.9 1187.1,761.5 1194.9,757.2 1202.6,753.8" stroke="#ff420e"/>
<polyline points="97.2,768.2 104.9,769.1 112.7,764.0 120.4,749.6 128.1,752.2 135.9,745.4 143.6,763.1 151.3,742.8 159.0,742.0 166.8,755.5 174.5,744.5 182.2,764.0 190.0,764.0 197.7,767.4 205.4,745.4 213.2,739.5 220.9,763.1 228.6,755.5 236.3,765.7 244.1,767.4 251.8,763.1 259.5,769.1 267.3,762.3 275.0,747.1 282.7,755.5 290.5,767.4 298.2,749.6 305.9,759.8 313.6,732.7 321.4,758.9 329.1,744.5 336.8,764.8 344.6,756.4 352.3,743.7 360.0,753.8 367.8,730.2 375.5,742.0 383.2,740.3 390.9,764.0 398.7,769.9 406.4,770.8 414.1,767.4 421.9,764.0 429.6,754.7 437.3,753.0 445.1,750.5 452.8,766.5 460.5,763.1 468.2,761.5 476.0,764.0 483.7,768.2 491.4,762.3 499.2,769.1 506.9,769.9 514.6,753.8 522.4,767.4 530.1,769.1 537.8,769.1 545.5,767.4 553.3,764.0 561.0,755.5 568.7,767.4 576.5,765.7 584.2,758.9 591.9,760.6 599.7,753.8 607.4,765.7 615.1,758.9 622.8,757.2 630.6,745.4 638.3,765.7 646.0,743.7 653.8,724.2 661.5,731.0 669.2,769.1 677.0,763.1 684.7,757.2 692.4,765.7 700.1,758.9 707.9,767.4 715.6,757.2 723.3,723.4 731.1,694.6 738.8,755.5 746.5,742.0 754.3,762.3 762.0,765.7 769.7,757.2 777.4,745.4 785.2,763.1 792.9,740.3 800.6,753.8 808.4,747.1 816.1,746.2 823.8,753.0 831.6,746.2 839.3,725.9 847.0,747.9 854.7,753.0 862.5,767.4 870.2,769.1 877.9,764.0 885.7,758.9 893.4,743.7 901.1,752.2 908.9,755.5 916.6,758.9 924.3,753.8 932.0,720.0 939.8,769.1 947.5,766.5 955.2,765.7 963.0,757.2 970.7,760.6 978.4,762.3 986.2,768.2 993.9,768.2 1001.6,730.2 1009.3,760.6 1017.1,754.7 1024.8,753.8 1032.5,743.7 1040.3,726.8 1048.0,754.7 1055.7,747.9 1063.5,747.1 1071.2,730.2 1078.9,739.5 1086.6,753.0 1094.4,745.4 1102.1,748.8 1109.8,758.9 1117.6,764.0 1125.3,753.0 1133.0,748.8 1140.8,756.4 1148.5,769.1 1156.2,747.9 1163.9,764.8 1171.7,766.5 1179.4,759.8 1187.1,762.3 1194.9,767.4 1202.6,739.5" stroke="#ffd320"/>
<polyline points="97.2,760.6 104.9,769.1 112.7,745.4 120.4,733.5 128.1,723.4 135.9,713.2 143.6,728.5 151.3,745.4 159.0,757.2 166.8,768.2 174.5,768.2 182.2,768.2 190.0,766.5 197.7,746.2 205.4,754.7 213.2,734.4 220.9,747.1 228.6,727.6 236.3,752.2 244.1,729.3 251.8,736.1 259.5,765.7 267.3,736.9 275.0,728.5 282.7,687.9 290.5,716.6 298.2,746.2 305.9,733.5 313.6,730.2 321.4,729.3 329.1,719.2 336.8,733.5 344.6,718.3 352.3,725.9 360.0,730.2 367.8,698.0 375.5,740.3 383.2,758.9 390.9,767.4 398.7,769.9 406.4,771.6 414.1,772.5 421.9,764.0 429.6,734.4 437.3,751.3 445.1,757.2 452.8,764.8 460.5,766.5 468.2,760.6 476.0,758.1 483.7,758.9 491.4,752.2 499.2,770.8 506.9,755.5 514.6,765.7 522.4,769.1 530.1,767.4 537.8,768.2 545.5,767.4 553.3,762.3 561.0,751.3 568.7,770.8 576.5,768.2 584.2,766.5 591.9,773.3 599.7,769.9 607.4,751.3 615.1,769.9 622.8,753.8 630.6,712.4 638.3,758.9 646.0,758.9 653.8,720.0 661.5,710.7 669.2,728.5 677.0,736.1 684.7,753.8 692.4,753.0 700.1,764.0 707.9,744.5 715.6,757.2 723.3,736.9 731.1,705.6 738.8,748.8 746.5,755.5 754.3,770.8 762.0,764.0 769.7,773.3 777.4,765.7 785.2,736.9 792.9,713.2 800.6,718.3 808.4,729.3 816.1,736.9 823.8,722.5 831.6,708.2 839.3,714.9 847.0,736.1 854.7,747.1 862.5,767.4 870.2,769.1 877.9,765.7 885.7,752.2 893.4,761.5 901.1,751.3 908.9,764.8 916.6,766.5 924.3,763.1 932.0,730.2 939.8,745.4 947.5,757.2 955.2,768.2 963.0,760.6 970.7,752.2 978.4,766.5 986.2,736.9 993.9,762.3 1001.6,740.3 1009.3,742.0 1017.1,741.2 1024.8,738.6 1032.5,742.0 1040.3,734.4 1048.0,736.9 1055.7,747.9 1063.5,743.7 1071.2,765.7 1078.9,764.8 1086.6,753.0 1094.4,754.7 1102.1,762.3 1109.8,763.1 1117.6,761.5 1125.3,755.5 1133.0,764.0 1140.8,750.5 1148.5,759.8 1156.2,742.0 1163.9,765.7 1171.7,769.1 1179.4,749.6 1187.1,731.0 1194.9,758.9 1202.6,731.0" stroke="#579d1c"/>
<polyline points="97.2,769.9 104.9,769.1 112.7,769.1 120.4,770.8 128.1,761.5 135.9,767.4 143.6,768.2 151.3,769.1 159.0,769.9 166.8,773.3 174.5,772.5 182.2,766.5 190.0,769.1 197.7,769.9 205.4,771.6 213.2,769.9 220.9,766.5 228.6,771.6 236.3,773.3 244.1,773.3 251.8,773.3 259.5,773.3 267.3,772.5 275.0,768.2 282.7,766.5 290.5,769.9 298.2,770.8 305.9,770.8 313.6,769.1 321.4,768.2 329.1,769.1 336.8,766.5 344.6,768.2 352.3,765.7 360.0,767.4 367.8,765.7 375.5,766.5 383.2,766.5 390.9,769.1 398.7,769.9 406.4,763.1 414.1,764.0 421.9,764.8 429.6,770.8 437.3,769.9 445.1,769.9 452.8,769.1 460.5,765.7 468.2,769.1 476.0,770.8 483.7,771.6 491.4,771.6 499.2,772.5 506.9,771.6 514.6,771.6 522.4,771.6 530.1,771.6 537.8,773.3 545.5,773.3 553.3,773.3 561.0,773.3 568.7,769.9 576.5,771.6 584.2,772.5 591.9,773.3 599.7,769.9 607.4,769.1 615.1,771.6 622.8,771.6 630.6,771.6 638.3,772.5 646.0,773.3 653.8,772.5 661.5,771.6 669.2,771.6 677.0,771.6 684.7,771.6 692.4,769.1 700.1,771.6 707.9,769.9 715.6,770.8 723.3,773.3 731.1,772.5 738.8,773.3 746.5,770.8 754.3,766.5 762.0,770.8 769.7,770.8 777.4,769.9 785.2,769.1 792.9,768.2 800.6,767.4 808.4,767.4 816.1,771.6 823.8,767.4 831.6,769.1 839.3,769.9 847.0,769.9 854.7,769.9 862.5,769.1 870.2,768.2 877.9,768.2 885.7,770.8 893.4,769.9 901.1,767.4 908.9,769.1 916.6,770.8 924.3,769.9 932.0,771.6 939.8,759.8 947.5,773.3 955.2,773.3 963.0,768.2 970.7,769.9 978.4,770.8 986.2,769.9 993.9,771.6 1001.6,771.6 1009.3,772.5 1017.1,771.6 1024.8,772.5 1032.5,771.6 1040.3,771.6 1048.0,771.6 1055.7,770.8 1063.5,764.0 1071.2,764.8 1078.9,769.1 1086.6,770.8 1094.4,771.6 1102.1,769.9 1109.8,767.4 1117.6,770.8 1125.3,769.1 1133.0,771.6 1140.8,769.9 1148.5,769.1 1156.2,764.8 1163.9,768.2 1171.7,769.9 1179.4,770.8 1187.1,771.6 1194.9,769.1 1202.6,768.2" stroke="#7e0021"/>
<polyline points="97.2,770.8 104.9,769.9 112.7,768.2 120.4,768.2 128.1,769.1 135.9,771.6 143.6,771.6 151.3,771.6 159.0,769.1 166.8,772.5 174.5,770.8 182.2,771.6 190.0,769.1 197.7,770.8 205.4,769.9 213.2,770.8 220.9,769.9 228.6,767.4 236.3,771.6 244.1,770.8 251.8,772.5 259.5,772.5 267.3,769.9 275.0,770.8 282.7,771.6 290.5,773.3 298.2,771.6 305.9,763.1 313.6,769.1 321.4,766.5 329.1,771.6 336.8,770.8 344.6,771.6 352.3,771.6 360.0,771.6 367.8,770.8 375.5,769.9 383.2,771.6 390.9,773.3 398.7,773.3 406.4,772.5 414.1,771.6 421.9,769.1 429.6,761.5 437.3,769.1 445.1,771.6 452.8,769.1 460.5,770.8 468.2,769.9 476.0,771.6 483.7,771.6 491.4,769.1 499.2,771.6 506.9,773.3 514.6,770.8 522.4,770.8 530.1,771.6 537.8,771.6 545.5,769.9 553.3,769.9 561.0,771.6 568.7,771.6 576.5,772.5 584.2,769.9 591.9,771.6 599.7,769.1 607.4,770.8 615.1,772.5 622.8,771.6 630.6,768.2 638.3,773.3 646.0,769.1 653.8,764.0 661.5,771.6 669.2,771.6 677.0,771.6 684.7,770.8 692.4,758.9 700.1,773.3 707.9,762.3 715.6,675.2 723.3,756.4 731.1,768.2 738.8,759.8 746.5,750.5 754.3,736.9 762.0,766.5 769.7,753.0 777.4,767.4 785.2,737.8 792.9,764.0 800.6,770.8 808.4,771.6 816.1,758.1 823.8,758.1 831.6,758.1 839.3,769.9 847.0,771.6 854.7,771.6 862.5,771.6 870.2,773.3 877.9,772.5 885.7,733.5 893.4,768.2 901.1,763.1 908.9,766.5 916.6,771.6 924.3,771.6 932.0,769.1 939.8,771.6 947.5,773.3 955.2,769.9 963.0,768.2 970.7,767.4 978.4,763.1 986.2,767.4 993.9,744.5 1001.6,766.5 1009.3,764.0 1017.1,773.3 1024.8,769.1 1032.5,770.8 1040.3,769.1 1048.0,770.8 1055.7,771.6 1063.5,771.6 1071.2,771.6 1078.9,769.1 1086.6,768.2 1094.4,765.7 1102.1,769.1 1109.8,773.3 1117.6,771.6 1125.3,769.1 1133.0,769.9 1140.8,773.3 1148.5,770.8 1156.2,770.8 1163.9,769.1 1171.7,773.3 1179.4,769.1 1187.1,770.8 1194.9,771.6 1202.6,771.6" stroke="#83caff"/>
<polyline points="97.2,772.5 104.9,773.3 112.7,743.7 120.4,767.4 128.1,764.8 135.9,773.3 143.6,701.4 151.3,769.9 159.0,747.1 166.8,769.1 174.5,751.3 182.2,773.3 190.0,772.5 197.7,772.5 205.4,773.3 213.2,772.5 220.9,772.5 228.6,771.6 236.3,735.2 244.1,771.6 251.8,762.3 259.5,770.8 267.3,754.7 275.0,765.7 282.7,773.3 290.5,765.7 298.2,769.9 305.9,772.5 313.6,748.8 321.4,764.0 329.1,770.8 336.8,773.3 344.6,773.3 352.3,754.7 360.0,769.9 367.8,767.4 375.5,772.5 383.2,763.1 390.9,771.6 398.7,772.5 406.4,771.6 414.1,770.8 421.9,766.5 429.6,755.5 437.3,771.6 445.1,770.8 452.8,771.6 460.5,772.5 468.2,767.4 476.0,772.5 483.7,771.6 491.4,771.6 499.2,770.8 506.9,771.6 514.6,771.6 522.4,772.5 530.1,767.4 537.8,768.2 545.5,746.2 553.3,772.5 561.0,754.7 568.7,771.6 576.5,771.6 584.2,772.5 591.9,769.9 599.7,767.4 607.4,759.8 615.1,771.6 622.8,771.6 630.6,754.7 638.3,769.1 646.0,764.8 653.8,759.8 661.5,771.6 669.2,772.5 677.0,770.8 684.7,772.5 692.4,772.5 700.1,765.7 707.9,761.5 715.6,758.1 723.3,725.9 731.1,760.6 738.8,769.1 746.5,767.4 754.3,748.8 762.0,769.9 769.7,758.9 777.4,753.0 785.2,768.2 792.9,767.4 800.6,768.2 808.4,763.1 816.1,771.6 823.8,763.1 831.6,772.5 839.3,759.8 847.0,764.8 854.7,772.5 862.5,767.4 870.2,772.5 877.9,771.6 885.7,771.6 893.4,771.6 901.1,772.5 908.9,772.5 916.6,773.3 924.3,769.9 932.0,767.4 939.8,739.5 947.5,772.5 955.2,771.6 963.0,769.1 970.7,771.6 978.4,769.9 986.2,771.6 993.9,772.5 1001.6,766.5 1009.3,768.2 1017.1,767.4 1024.8,766.5 1032.5,773.3 1040.3,768.2 1048.0,768.2 1055.7,769.1 1063.5,772.5 1071.2,769.1 1078.9,765.7 1086.6,769.9 1094.4,771.6 1102.1,771.6 1109.8,771.6 1117.6,771.6 1125.3,765.7 1133.0,767.4 1140.8,769.9 1148.5,769.9 1156.2,773.3 1163.9,768.2 1171.7,770.8 1179.4,766.5 1187.1,769.1 1194.9,764.8 1202.6,766.5" stroke="#314004"/>
<polyline points="97.2,717.5 104.9,726.8 112.7,636.3 120.4,692.1 128.1,654.9 135.9,709.9 143.6,712.4 151.3,687.0 159.0,592.3 166.8,707.3 174.5,622.7 182.2,694.6 190.0,676.0 197.7,735.2 205.4,711.6 213.2,673.5 220.9,745.4 228.6,640.5 236.3,688.7 244.1,737.8 251.8,690.4 259.5,753.0 267.3,733.5 275.0,718.3 282.7,730.2 290.5,736.1 298.2,713.2 305.9,705.6 313.6,592.3 321.4,644.7 329.1,725.9 336.8,714.1 344.6,716.6 352.3,599.9 360.0,735.2 367.8,646.4 375.5,698.9 383.2,665.0 390.9,744.5 398.7,768.2 406.4,740.3 414.1,743.7 421.9,685.3 429.6,658.3 437.3,708.2 445.1,731.0 452.8,720.0 460.5,721.7 468.2,682.8 476.0,729.3 483.7,752.2 491.4,689.6 499.2,723.4 506.9,754.7 514.6,671.0 522.4,736.9 530.1,738.6 537.8,705.6 545.5,744.5 553.3,676.9 561.0,711.6 568.7,715.8 576.5,736.1 584.2,708.2 591.9,700.6 599.7,624.4 607.4,685.3 615.1,744.5 622.8,678.6 630.6,608.4 638.3,728.5 646.0,675.2 653.8,649.0 661.5,683.6 669.2,736.9 677.0,707.3 684.7,684.5 692.4,709.9 700.1,698.9 707.9,693.8 715.6,563.5 723.3,382.5 731.1,590.6 738.8,677.7 746.5,653.2 754.3,628.7 762.0,714.1 769.7,674.3 777.4,580.4 785.2,649.0 792.9,594.8 800.6,663.3 808.4,666.7 816.1,676.9 823.8,683.6 831.6,714.1 839.3,601.6 847.0,678.6 854.7,696.3 862.5,718.3 870.2,719.2 877.9,711.6 885.7,701.4 893.4,714.9 901.1,671.8 908.9,710.7 916.6,730.2 924.3,700.6 932.0,636.3 939.8,732.7 947.5,715.8 955.2,726.8 963.0,690.4 970.7,703.9 978.4,660.0 986.2,709.0 993.9,701.4 1001.6,660.0 1009.3,664.2 1017.1,675.2 1024.8,636.3 1032.5,728.5 1040.3,624.4 1048.0,671.0 1055.7,698.0 1063.5,676.9 1071.2,694.6 1078.9,653.2 1086.6,678.6 1094.4,648.1 1102.1,698.0 1109.8,714.9 1117.6,721.7 1125.3,654.9 1133.0,689.6 1140.8,710.7 1148.5,719.2 1156.2,695.5 1163.9,710.7 1171.7,733.5 1179.4,642.2 1187.1,713.2 1194.9,665.9 1202.6,698.9" stroke="#4b1f6f"/>
<polyline points="97.2,540.7 104.9,540.7 112.7,538.2 120.4,512.8 128.1,543.2 135.9,692.9 143.6,646.4 151.3,685.3 159.0,687.0 166.8,636.3 174.5,669.3 182.2,683.6 190.0,670.1 197.7,676.9 205.4,694.6 213.2,703.1 220.9,688.7 228.6,657.4 236.3,665.0 244.1,663.3 251.8,687.0 259.5,693.8 267.3,692.1 275.0,682.8 282.7,656.6 290.5,632.0 298.2,687.0 305.9,637.1 313.6,699.7 321.4,683.6 329.1,679.4 336.8,650.7 344.6,653.2 352.3,644.7 360.0,636.3 367.8,688.7 375.5,681.1 383.2,677.7 390.9,632.0 398.7,683.6 406.4,687.0 414.1,686.2 421.9,648.1 429.6,646.4 437.3,659.1 445.1,656.6 452.8,671.8 460.5,683.6 468.2,473.9 476.0,555.9 483.7,545.8 491.4,549.1 499.2,477.2 506.9,254.8 514.6,531.4 522.4,533.1 530.1,548.3 537.8,240.4 545.5,347.8 553.3,533.9 561.0,514.5 568.7,483.2 576.5,547.5 584.2,506.9 591.9,502.6 599.7,503.5 607.4,464.6 615.1,511.9 622.8,506.9 630.6,481.5 638.3,459.5 646.0,479.8 653.8,496.7 661.5,501.8 669.2,501.8 677.0,525.5 684.7,491.6 692.4,473.9 700.1,429.9 707.9,342.8 715.6,488.2 723.3,511.1 731.1,523.8 738.8,483.2 746.5,491.6 754.3,462.0 762.0,484.9 769.7,493.3 777.4,524.6 785.2,639.7 792.9,483.2 800.6,511.1 808.4,485.7 816.1,532.2 823.8,519.5 831.6,489.9 839.3,497.6 847.0,493.3 854.7,462.9 862.5,540.7 870.2,500.1 877.9,504.3 885.7,521.2 893.4,502.6 901.1,508.5 908.9,502.6 916.6,522.1 924.3,520.4 932.0,509.4 939.8,530.5 947.5,467.9 955.2,516.2 963.0,522.9 970.7,502.6 978.4,509.4 986.2,530.5 993.9,480.6 1001.6,486.6 1009.3,518.7 1017.1,508.5 1024.8,501.8 1032.5,487.4 1040.3,527.2 1048.0,499.2 1055.7,514.5 1063.5,523.8 1071.2,499.2 1078.9,517.0 1086.6,526.3 1094.4,507.7 1102.1,500.1 1109.8,517.9 1117.6,511.1 1125.3,520.4 1133.0,495.0 1140.8,506.0 1148.5,525.5 1156.2,658.3 1163.9,632.0 1171.7,672.6 1179.4,671.8 1187.1,632.9 1194.9,667.6 1202.6,650.7" stroke="#ff0080"/>
</g>
<rect x="1233" y="407.80" width="29" height="3" fill="#004586"/>
<text x="1265.3" y="413.20" font-size="12.35" fill="#000">home</text>
<rect x="1233" y="426.58" width="29" height="3" fill="#ff420e"/>
<text x="1265.3" y="431.98" font-size="12.35" fill="#000">users</text>
<rect x="1233" y="445.36" width="29" height="3" fill="#ffd320"/>
<text x="1265.3" y="450.76" font-size="12.35" fill="#000">userFragments</text>
<rect x="1233" y="464.14" width="29" height="3" fill="#579d1c"/>
<text x="1265.3" y="469.54" font-size="12.35" fill="#000">postFragments</text>
<rect x="1233" y="482.92" width="29" height="3" fill="#7e0021"/>
<text x="1265.3" y="488.32" font-size="12.35" fill="#000">api</text>
<rect x="1233" y="501.70" width="29" height="3" fill="#83caff"/>
<text x="1265.3" y="507.10" font-size="12.35" fill="#000">fpredirects</text>
<rect x="1233" y="520.48" width="29" height="3" fill="#314004"/>
<text x="1265.3" y="525.88" font-size="12.35" fill="#000">posts</text>
<rect x="1233" y="539.26" width="29" height="3" fill="#e6e619"/>
<text x="1265.3" y="544.66" font-size="12.35" fill="#000">static</text>
<rect x="1233" y="558.04" width="29" height="3" fill="#4b1f6f"/>
<text x="1265.3" y="563.44" font-size="12.35" fill="#000">static</text>
<rect x="1233" y="576.82" width="29" height="3" fill="#ff0080"/>
<text x="1265.3" y="582.22" font-size="12.35" fill="#000">feed</text>
<rect x="1381" y="123" width="12" height="720" fill="#3b3b3b"/>
<rect x="1381" y="123.5" width="12" height="5.5" fill="#7d7d7d"/>
<rect x="1384" y="126" width="6" height="1.3" fill="#000"/>
<rect x="1383.8" y="203" width="6.2" height="307.5" rx="3" fill="#7c7c7c"/>
<rect x="0" y="843" width="1376" height="12" fill="#3c3c3c"/>
<rect x="4" y="846.2" width="130" height="6" rx="3" fill="#7a7a7a"/>
<rect x="1376" y="843" width="5" height="12" fill="#7a7a7a"/>
<rect x="1378" y="846" width="1.2" height="6" fill="#000"/>
<rect x="13.6" y="859" width="1.6" height="16" fill="#d2d2d2"/><path d="M23.2 859v16l-7.6-8z" fill="#d2d2d2"/>
<path d="M47.2 859v16l-8.6-8z" fill="#d2d2d2"/>
<path d="M63.6 859v16l8.2-8z" fill="#d2d2d2"/>
<path d="M87.8 859v16l7.6-8z" fill="#d2d2d2"/><rect x="96.6" y="859" width="1.6" height="16" fill="#d2d2d2"/>
<rect x="116" y="865.6" width="17" height="3.8" fill="#e4e4e4"/><rect x="122.6" y="859" width="3.8" height="17" fill="#e4e4e4"/>
<rect x="143" y="855" width="57" height="25" fill="#424242"/>
<rect x="143" y="877" width="57" height="3" fill="#d8d8d8"/>
<text x="155" y="870.1" font-size="12.2" fill="#c4c4c4" textLength="32.5" lengthAdjust="spacingAndGlyphs" >Sheet1</text>
<rect x="0" y="880" width="1393" height="1" fill="#6d6d6d"/>
<text x="10" y="894" font-size="12.2" fill="#cccccc" textLength="96.0" lengthAdjust="spacingAndGlyphs" >Chart Area selected</text>
<rect x="1413" y="884" width="1" height="13" fill="#303030"/>
<rect x="1393" y="89" width="47" height="792" fill="#383838"/>
<rect x="1393" y="89" width="44" height="2" fill="#7f7f7f"/>
<rect x="1393" y="878" width="44" height="3" fill="#7f7f7f"/>
<rect x="1395" y="91" width="4" height="787" fill="#343434"/>
<rect x="1393" y="89" width="2" height="791" fill="#7f7f7f"/>
<rect x="1399" y="91" width="2" height="788" fill="#7f7f7f"/>
<rect x="1393" y="448" width="7.2" height="73" fill="#dcdcdc"/>
<path d="M1394.3 480.6v7.4l4.8-3.7z" fill="#3a3a3a"/>
<rect x="1419" y="103" width="2.2" height="2.2" fill="#5c5c5c"/>
<rect x="1419" y="108" width="2.2" height="2.2" fill="#5c5c5c"/>
<rect x="1419" y="113" width="2.2" height="2.2" fill="#5c5c5c"/>
<rect x="1409" y="128" width="22" height="1" fill="#2b2b2b"/>
<rect x="1404.5" y="132.5" width="31" height="31" rx="4" fill="none" stroke="#d4d4d4" stroke-width="1"/>
<rect x="1410" y="138" width="20" height="20" fill="#ffffff"/>
<rect x="1410" y="138" width="20" height="4" fill="#8c8c8c"/>
<rect x="1410" y="138" width="20" height="20" fill="none" stroke="#8c8c8c" stroke-width="1"/>
<rect x="1414" y="147" width="12" height="1" fill="#8c8c8c"/><rect x="1414" y="151" width="12" height="1" fill="#8c8c8c"/>
<circle cx="1421.5" cy="147.5" r="1.4" fill="#8c8c8c"/><circle cx="1418.5" cy="151.5" r="1.3" fill="#fff" stroke="#6d87a8" stroke-width="0.8"/>
<rect x="3" y="57" width="3" height="2.9" fill="#8c8c8c" /><rect x="3" y="61" width="3" height="2.9" fill="#8c8c8c" /><rect x="3" y="65" width="3" height="2.9" fill="#8c8c8c" /><rect x="3" y="69" width="3" height="2.9" fill="#8c8c8c" /><rect x="3" y="73" width="3" height="2.9" fill="#8c8c8c" /><rect x="3" y="77" width="3" height="2.9" fill="#8c8c8c" /><rect x="179" y="57" width="3" height="2.9" fill="#8c8c8c" /><rect x="179" y="61" width="3" height="2.9" fill="#8c8c8c" /><rect x="179" y="65" width="3" height="2.9" fill="#8c8c8c" /><rect x="179" y="69" width="3" height="2.9" fill="#8c8c8c" /><rect x="179" y="73" width="3" height="2.9" fill="#8c8c8c" /><rect x="179" y="77" width="3" height="2.9" fill="#8c8c8c" /><rect x="15" y="61" width="16" height="16" fill="#9656b8" rx="0.8"/><rect x="17" y="62" width="12.3" height="6" fill="#ffffff" /><rect x="18" y="71" width="7" height="5" fill="#ffffff" /><rect x="20" y="72.2" width="2" height="3.8" fill="#9656b8" /><circle cx="28" cy="73.9" r="3.6" fill="#383838"/><circle cx="28" cy="73.9" r="3.05" fill="#e0562c"/><path d="M38.8 66.8h6.4l-3.2 3.3z" fill="#e8e8e8"/><path d="M62.3 61.2h7.4l4.3 4.1v11.5h-11.7z" fill="#ffffff"/><path d="M69.7 61.2v4.1h4.3z" fill="#cfcfcf" stroke="#8a8a8a" stroke-width="0.5"/><path d="M70.7 67.8c0.6 2 0.6 3.6 0.5 4.9c-1 1.8-2.4 3.2-4 4.2M71.2 72.7c1.6 0.4 3.2 0.9 4.8 1.7" fill="none" stroke="#d8532b" stroke-width="1.5" stroke-linecap="round"/><rect x="88" y="61" width="10.2" height="6" fill="#e2e2e2" /><path d="M86 66.2h14a1 1 0 0 1 1 1v5.8h-16v-5.8a1 1 0 0 1 1-1z" fill="#cdcdcd"/><rect x="87" y="66.2" width="12.2" height="0.9" fill="#383838" /><rect x="89" y="71.6" width="8" height="5.4" fill="#e6e6e6" /><path d="M124.7 61.3L118.4 66L124.7 70.8M118.8 66H128.5A5.2 5.2 0 0 1 128.5 76.4H127" fill="none" stroke="#cfcfcf" stroke-width="1.6"/><path d="M152.3 61.3L158.6 66L152.3 70.8M158.2 66H148.5A5.2 5.2 0 0 0 148.5 76.4H150" fill="none" stroke="#cfcfcf" stroke-width="1.6"/><rect x="348.5" y="61.5" width="15" height="15" fill="#ffffff" stroke="#8a8a8a" stroke-width="1"/><rect x="348" y="61" width="16" height="3.6" fill="#8a8a8a" /><rect x="350.5" y="68" width="11.5" height="1" fill="#8a8a8a" /><rect x="350.5" y="72" width="11.5" height="1" fill="#8a8a8a" /><circle cx="357.6" cy="68.5" r="1.3" fill="#8a8a8a"/><circle cx="354.5" cy="72.5" r="1.2" fill="#fff" stroke="#5f7fa6" stroke-width="0.8"/><rect x="382" y="66.3" width="4" height="10.3" fill="#4a86c8" rx="0.6"/><path d="M387 61.6a0.6 0.6 0 0 1 0.6-0.6h2.8a0.6 0.6 0 0 1 0.6 0.6v10.4l-4 3.8z" fill="#efc46f"/><path d="M396.6 69.2v7.3h-7.3z" fill="none" stroke="#4a86c8" stroke-width="1.1"/><rect x="406.5" y="62" width="14.5" height="12" fill="#ffffff" stroke="#a8a8a8" stroke-width="0.9"/><rect x="413.3" y="62" width="0.9" height="12" fill="#8c8c8c" /><rect x="406.5" y="67.6" width="14.5" height="0.9" fill="#8c8c8c" /><rect x="406" y="75" width="15.2" height="2" fill="#efc46f" /><rect x="433.2" y="61" width="1.1" height="15" fill="#efc46f" /><rect x="439.4" y="61" width="1.1" height="15" fill="#efc46f" /><rect x="445.6" y="61" width="1.1" height="15" fill="#efc46f" /><rect x="431.5" y="62.5" width="15.5" height="1.1" fill="#efc46f" /><rect x="431.5" y="66.4" width="15.5" height="1.1" fill="#efc46f" /><rect x="431.5" y="70.5" width="15.5" height="1.1" fill="#efc46f" /><rect x="431.5" y="75.6" width="15.5" height="1" fill="#8a8a8a" /><rect x="431.6" y="61" width="1" height="15.6" fill="#8a8a8a" /><rect x="438.1" y="62.5" width="3.8" height="12.6" fill="#8a8a8a" /><rect x="434.8" y="70.6" width="3.3" height="4.5" fill="#ffffff" /><rect x="441.9" y="68.8" width="3.7" height="6.3" fill="#ffffff" /><path d="M459 61h12.4a0.6 0.6 0 0 1 0.6 0.6v12.4l-3 3h-12.4a0.6 0.6 0 0 1-0.6-0.6v-12.4z" fill="#c4c4c4"/><path d="M459 61h12.4a0.6 0.6 0 0 1 0.6 0.6v12.4z" fill="#cccccc"/><rect x="490" y="61" width="1" height="16" fill="#8a8a8a" /><rect x="489" y="75.6" width="8" height="1" fill="#8a8a8a" /><rect x="496.3" y="62" width="3.7" height="4.6" fill="#8a8a8a" /><rect x="491.6" y="68.4" width="2.6" height="7.2" fill="#ffffff" /><path d="M495 70.3a5 2.5 0 0 1 10 0v4.2a5 2.5 0 0 1-10 0z" fill="#efc46f"/><path d="M495 72.6a5 2.5 0 0 0 10 0" fill="none" stroke="#383838" stroke-width="0.9"/><path d="M496 66.8l8-1.5" stroke="#8a8a8a" stroke-width="0.7"/><path d="M514 64.4a8 3.4 0 0 1 16 0v9.2a8 3.4 0 0 1-16 0z" fill="#d6d6d6"/><path d="M514 67.6a8 3.4 0 0 0 16 0M514 71.6a8 3.4 0 0 0 16 0" fill="none" stroke="#bdbdbd" stroke-width="0.9"/><rect x="546.8" y="62" width="1.2" height="11" fill="#efc46f" /><rect x="551" y="61" width="11" height="1.1" fill="#efc46f" /><rect x="551" y="75.9" width="12" height="1.1" fill="#efc46f" /><rect x="549" y="61" width="1" height="15" fill="#8a8a8a" /><rect x="548" y="74.2" width="14.5" height="1" fill="#8a8a8a" /><rect x="551.9" y="68.0" width="2.3" height="6.2" fill="#ffffff" /><rect x="554.2" y="63.0" width="3.8" height="11.2" fill="#8a8a8a" /><rect x="558.0" y="65.6" width="3.0" height="8.6" fill="#ffffff" /><rect x="577" y="57" width="23" height="25" fill="#8faa72" rx="3" stroke="#2b2b2b" stroke-width="0.8"/><rect x="581.2" y="61" width="1" height="15.6" fill="#8a8a8a" /><rect x="580" y="75.2" width="16" height="1" fill="#8a8a8a" /><rect x="584" y="66.9" width="3.5" height="8.3" fill="#ffffff" /><rect x="587.5" y="65.6" width="3.5" height="9.6" fill="#8a8a8a" /><rect x="591.0" y="68.7" width="3.6" height="6.5" fill="#ffffff" /><rect x="589.2" y="62.3" width="5.6" height="3" fill="#ffffff" stroke="#efc46f" stroke-width="1"/><rect x="606.2" y="66" width="1" height="10.6" fill="#8a8a8a" /><rect x="605" y="75.2" width="16" height="1" fill="#8a8a8a" /><rect x="609" y="66.9" width="3.5" height="8.3" fill="#ffffff" /><rect x="612.5" y="65.6" width="3.5" height="9.6" fill="#8a8a8a" /><rect x="616.0" y="68.7" width="3.6" height="6.5" fill="#ffffff" /><rect x="614.2" y="62.3" width="5.6" height="3" fill="#ffffff" stroke="#efc46f" stroke-width="1"/><rect x="605" y="61" width="5" height="5" fill="#efc46f" /><path d="M606 65l3-3" stroke="#383838" stroke-width="0.9"/><rect x="635" y="57" width="23" height="25" fill="#8faa72" rx="3" stroke="#2b2b2b" stroke-width="0.8"/><rect x="638" y="62.5" width="16" height="1" fill="#efc46f" /><rect x="638" y="66.5" width="16" height="1" fill="#efc46f" /><rect x="638" y="70.6" width="16" height="1" fill="#efc46f" /><rect x="639" y="61" width="1.1" height="16" fill="#efc46f" /><rect x="638" y="64.5" width="1.6" height="0.9" fill="#efc46f" /><rect x="638" y="68.5" width="1.6" height="0.9" fill="#efc46f" /><rect x="638" y="72.6" width="1.6" height="0.9" fill="#efc46f" /><rect x="640" y="75.2" width="14" height="1" fill="#8a8a8a" /><rect x="641.5" y="68.8" width="3.5" height="6.4" fill="#ffffff" /><rect x="645.0" y="62.4" width="3.9" height="12.8" fill="#8a8a8a" /><rect x="648.9" y="67.0" width="3.6" height="8.2" fill="#ffffff" /><rect x="667.2" y="61" width="1.1" height="15" fill="#efc46f" /><rect x="671.5" y="61" width="1.1" height="15" fill="#efc46f" /><rect x="676.4" y="61" width="1.1" height="15" fill="#efc46f" /><rect x="664.2" y="61" width="1" height="15.5" fill="#8a8a8a" /><rect x="663" y="75.6" width="16" height="1.1" fill="#efc46f" /><rect x="665.5" y="76.5" width="0.9" height="1.2" fill="#efc46f" /><rect x="669.5" y="76.5" width="0.9" height="1.2" fill="#efc46f" /><rect x="673.5" y="76.5" width="0.9" height="1.2" fill="#efc46f" /><rect x="677.4" y="76.5" width="0.9" height="1.2" fill="#efc46f" /><rect x="666.5" y="69.0" width="3.5" height="6.4" fill="#ffffff" /><rect x="670.0" y="62.4" width="4.0" height="13" fill="#8a8a8a" /><rect x="674.0" y="66.9" width="3.8" height="8.5" fill="#ffffff" /><rect x="697.2" y="61" width="1" height="15" fill="#8a8a8a" /><rect x="696" y="75.4" width="16" height="1.3" fill="#efc46f" /><rect x="698.5" y="76.5" width="0.9" height="1.2" fill="#efc46f" /><rect x="702.5" y="76.5" width="0.9" height="1.2" fill="#efc46f" /><rect x="706.5" y="76.5" width="0.9" height="1.2" fill="#efc46f" /><rect x="710.4" y="76.5" width="0.9" height="1.2" fill="#efc46f" /><rect x="699.5" y="68.8" width="3.5" height="6.6" fill="#ffffff" /><rect x="703.0" y="62.4" width="4.0" height="13" fill="#8a8a8a" /><rect x="707.0" y="66.9" width="3.6" height="8.5" fill="#ffffff" /><rect x="722.2" y="61" width="1.3" height="16" fill="#efc46f" /><rect x="721" y="62.5" width="1.4" height="0.9" fill="#efc46f" /><rect x="721" y="66.5" width="1.4" height="0.9" fill="#efc46f" /><rect x="721" y="70.5" width="1.4" height="0.9" fill="#efc46f" /><rect x="721" y="74.4" width="1.4" height="0.9" fill="#efc46f" /><rect x="723" y="75.2" width="14" height="1" fill="#8a8a8a" /><rect x="724.5" y="68.8" width="3.5" height="6.4" fill="#ffffff" /><rect x="728.0" y="62.2" width="4.0" height="13" fill="#8a8a8a" /><rect x="732.0" y="66.7" width="3.6" height="8.5" fill="#ffffff" /><path d="M751.3 61v10.6h10.7M751.3 71.6l-4.4 4.4" fill="none" stroke="#c9c9c9" stroke-width="1.1"/><path d="M776.3 61v10.6h10.7M776.3 71.6l-4.4 4.4" fill="none" stroke="#efc46f" stroke-width="1.2"/><rect x="775" y="62.5" width="1.4" height="0.9" fill="#efc46f" /><rect x="778.8" y="72" width="0.9" height="1.3" fill="#efc46f" /><rect x="775" y="65.1" width="1.4" height="0.9" fill="#efc46f" /><rect x="781.1999999999999" y="72" width="0.9" height="1.3" fill="#efc46f" /><rect x="775" y="67.7" width="1.4" height="0.9" fill="#efc46f" /><rect x="783.5999999999999" y="72" width="0.9" height="1.3" fill="#efc46f" /><rect x="775" y="70.3" width="1.4" height="0.9" fill="#efc46f" /><rect x="786.0" y="72" width="0.9" height="1.3" fill="#efc46f" /></svg>
</body></html>
